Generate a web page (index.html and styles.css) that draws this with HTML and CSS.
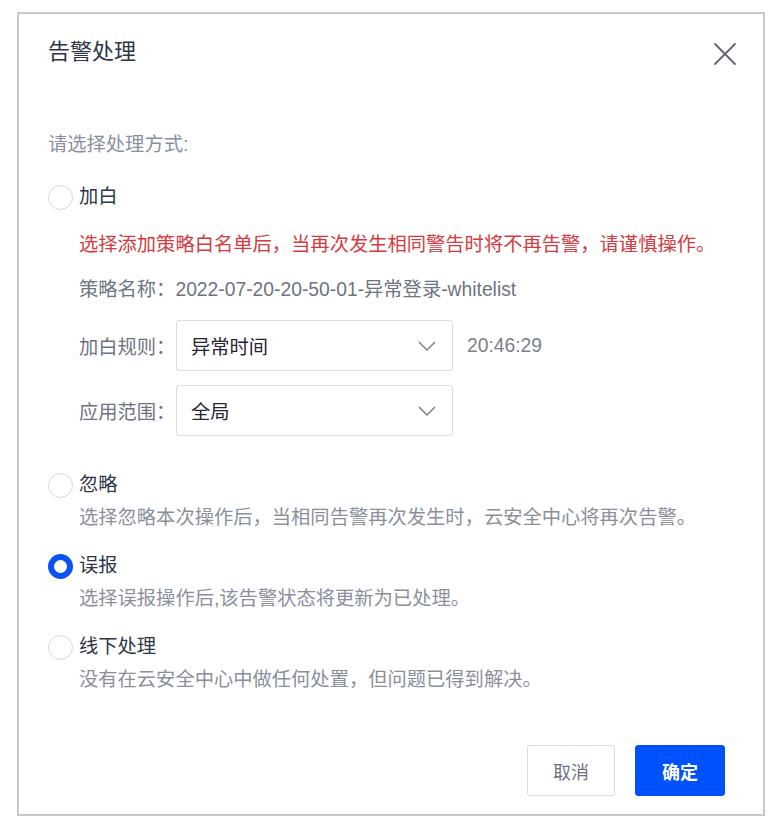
FILE: index.html
```html
<!DOCTYPE html>
<html lang="zh-CN">
<head>
<meta charset="utf-8">
<title>告警处理</title>
<link rel="stylesheet" href="styles.css">
</head>
<body>
<div class="dialog">
  <div class="header">
    <div class="title">告警处理</div>
    <svg class="close" width="24" height="24" viewBox="0 0 24 24"><path d="M2 2 L22 22 M22 2 L2 22" stroke="#5f6673" stroke-width="1.8" fill="none" stroke-linecap="round"/></svg>
  </div>
  <div class="body">
    <div class="prompt">请选择处理方式:</div>
    <div class="option first">
      <span class="radio"></span><span class="label">加白</span>
    </div>
    <div class="warn">选择添加策略白名单后，当再次发生相同警告时将不再告警，请谨慎操作。</div>
    <div class="policy">策略名称：2022-07-20-20-50-01-异常登录-whitelist</div>
    <div class="field f1">
      <span class="flabel">加白规则：</span>
      <div class="select"><span>异常时间</span><svg width="20" height="12" viewBox="0 0 20 12"><path d="M2 2 L10 10 L18 2" stroke="#7a808c" stroke-width="1.5" fill="none"/></svg></div>
      <span class="time">20:46:29</span>
    </div>
    <div class="field f2">
      <span class="flabel">应用范围：</span>
      <div class="select"><span>全局</span><svg width="20" height="12" viewBox="0 0 20 12"><path d="M2 2 L10 10 L18 2" stroke="#7a808c" stroke-width="1.5" fill="none"/></svg></div>
    </div>
    <div class="option o2">
      <span class="radio"></span><span class="label">忽略</span>
    </div>
    <div class="desc">选择忽略本次操作后，当相同告警再次发生时，云安全中心将再次告警。</div>
    <div class="option o3">
      <span class="radio checked"></span><span class="label">误报</span>
    </div>
    <div class="desc">选择误报操作后,该告警状态将更新为已处理。</div>
    <div class="option o3">
      <span class="radio"></span><span class="label">线下处理</span>
    </div>
    <div class="desc">没有在云安全中心中做任何处置，但问题已得到解决。</div>
  </div>
  <div class="footer">
    <button class="btn cancel">取消</button>
    <button class="btn ok">确定</button>
  </div>
</div>
</body>
</html>
```

FILE: styles.css
```css
* { box-sizing: border-box; }
html, body { margin: 0; padding: 0; background: #fff; }
body {
  font-family: "Liberation Sans", "Noto Sans CJK SC", sans-serif;
  font-size: 19.3px;
  color: #333a48;
}
.dialog {
  margin: 12px 0 0 17px;
  width: 748px;
  height: 804px;
  border: 2px solid #c9c9c9;
  display: flex;
  flex-direction: column;
}
.header {
  display: flex;
  justify-content: space-between;
  align-items: flex-start;
  padding: 23px 26px 0 29px;
}
.title {
  font-size: 22px;
  line-height: 30px;
  color: #2e3646;
}
.close { margin-top: 5px; }
.body {
  padding: 64px 0 0 29px;
  display: flex;
  flex-direction: column;
}
.prompt { line-height: 28px; color: #8a909b; }
.option {
  display: flex;
  align-items: center;
  height: 28px;
}
.option.first { margin-top: 24px; }
.option.o2 { margin-top: 35px; }
.option.o3 { margin-top: 20px; }
.radio {
  width: 25px;
  height: 25px;
  border-radius: 50%;
  border: 1px solid #d5d8de;
  background: #fff;
  margin-right: 6px;
  flex: none;
}
.radio.checked { border: 6px solid #0a52f5; }
.label { color: #2e3646; line-height: 28px; }
.warn {
  margin: 20px 0 0 31px;
  line-height: 28px;
  color: #d63a40;
}
.policy {
  margin: 17px 0 0 31px;
  line-height: 28px;
  color: #6e7480;
}
.field {
  display: flex;
  align-items: center;
  margin-left: 31px;
  height: 51px;
}
.field.f1 { margin-top: 16px; }
.field.f2 { margin-top: 14px; }
.flabel { flex: none; width: 97px; white-space: nowrap; color: #6e7480; }
.select {
  flex: none;
  width: 277px;
  height: 51px;
  border: 1px solid #d9dce1;
  border-radius: 3px;
  display: flex;
  align-items: center;
  justify-content: space-between;
  padding: 0 15px 0 14px;
  color: #1f2533;
}
.time { margin-left: 14px; color: #7a808c; white-space: nowrap; }
.desc {
  margin: 5px 0 0 31px;
  line-height: 28px;
  color: #8a909b;
}
.footer {
  display: flex;
  justify-content: flex-end;
  gap: 20px;
  padding: 51px 38px 0 0;
}
.btn {
  height: 51px;
  font-family: inherit;
  font-size: 18px;
  border-radius: 3px;
  cursor: pointer;
}
.cancel {
  width: 88px;
  background: #fff;
  border: 1px solid #d9dce1;
  color: #6e7480;
}
.ok {
  width: 90px;
  background: #0052ff;
  border: 1px solid #0052ff;
  color: #fff;
  font-weight: bold;
}
```
